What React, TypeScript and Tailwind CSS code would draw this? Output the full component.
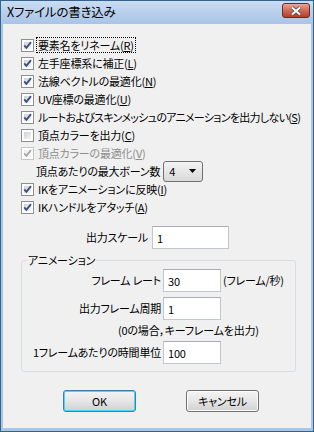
import { ReactNode } from 'react';

// Windows 7 風「Xファイルの書き込み」ダイアログ

const FONT = "font-['Noto_Sans_CJK_JP','Noto_Sans',sans-serif] [font-feature-settings:'palt']";

function CheckBox({ checked, disabled }: { checked: boolean; disabled?: boolean }) {
    return (
        <span
            className={`relative w-[13px] h-[13px] shrink-0 border bg-white p-[2px] flex ${disabled ? 'border-[#c5c5c5]' : 'border-[#8e8f8f]'}`}
        >
            <span
                className={`flex-1 bg-linear-to-br ${disabled ? 'from-[#eeeeee] to-[#fafafa]' : 'from-[#cfd3d8] to-[#f4f4f5]'}`}
            />
            {checked && (
                <svg className="absolute left-0 top-0" width="11" height="11" viewBox="0 0 11 11">
                    <path
                        d="M2.2 5.4 L4.4 7.8 L9 2.2"
                        fill="none"
                        stroke={disabled ? '#a8a8a8' : '#3a4f86'}
                        strokeWidth="1.9"
                    />
                </svg>
            )}
        </span>
    );
}

function Mn({ k }: { k: string }) {
    // ニーモニック (R) など
    return (
        <>
            (<span className="underline underline-offset-[1px]">{k}</span>)
        </>
    );
}

function CheckRow({
    label,
    k,
    checked,
    disabled,
    focus,
    tight,
}: {
    label: string;
    k: string;
    checked: boolean;
    disabled?: boolean;
    focus?: boolean;
    tight?: boolean;
}) {
    return (
        <div className="h-[18px] flex items-center gap-[2px]">
            <CheckBox checked={checked} disabled={disabled} />
            <span
                className={`whitespace-nowrap leading-[14px] px-[1px] border ${tight ? 'tracking-[-0.7px]' : ''} ${focus ? 'border-dotted border-black' : 'border-transparent'} ${disabled ? 'text-[#8d8d8d]' : 'text-black'}`}
            >
                {label}
                <Mn k={k} />
            </span>
        </div>
    );
}

function TextBox({ value, w }: { value: string; w: string }) {
    return (
        <input
            readOnly
            defaultValue={value}
            className={`${w} h-[23px] border border-[#c2c6cd] border-t-[#abadb3] bg-white px-[4px] text-[11px] text-black outline-none`}
        />
    );
}

function Button({ children, primary }: { children: ReactNode; primary?: boolean }) {
    return (
        <button
            className={`w-[73px] h-[22px] rounded-[3px] border text-[11px] text-black bg-linear-to-b from-[#f4f4f4] via-[#e6e6e6] to-[#d0d0d0] ${primary ? 'border-[#3c7fb1] shadow-[inset_0_0_0_1px_#48d7fb]' : 'border-[#707070] shadow-[inset_0_0_0_1px_#fcfcfc]'}`}
        >
            {children}
        </button>
    );
}

const options: { label: string; k: string; checked: boolean; disabled?: boolean; focus?: boolean; tight?: boolean }[] = [
    { label: '要素名をリネーム', k: 'R', checked: true, focus: true },
    { label: '左手座標系に補正', k: 'L', checked: true },
    { label: '法線ベクトルの最適化', k: 'N', checked: true },
    { label: 'UV座標の最適化', k: 'U', checked: true },
    { label: 'ルートおよびスキンメッシュのアニメーションを出力しない', k: 'S', checked: true, tight: true },
    { label: '頂点カラーを出力', k: 'C', checked: false },
    { label: '頂点カラーの最適化', k: 'V', checked: true, disabled: true },
];

export default function App() {
    return (
        <div className={`w-[314px] h-[432px] flex flex-col border border-[#35628f] bg-[#a9c5e8] text-[11px] tracking-[-0.2px] ${FONT}`}>
            {/* タイトルバー */}
            <div className="h-[23px] shrink-0 flex items-center justify-between pl-[6px] pr-[3px] bg-linear-to-b from-[#cadcf1] to-[#a8c4e7]">
                <span className="text-[12.5px] text-black leading-none">Xファイルの書き込み</span>
                <div className="w-[28px] h-[15px] mt-[-4px] rounded-[3px] border border-[#6a2a22] bg-linear-to-b from-[#e6a798] via-[#cf6a55] to-[#b93a26] flex items-center justify-center">
                    <svg width="12" height="10" viewBox="0 0 12 10">
                        <path d="M2 1.5 L10 8.5 M10 1.5 L2 8.5" stroke="#4a4a4a" strokeWidth="3.6" />
                        <path d="M2 1.5 L10 8.5 M10 1.5 L2 8.5" stroke="#ffffff" strokeWidth="2" />
                    </svg>
                </div>
            </div>

            {/* 本体 */}
            <div className="flex-1 mx-[2px] mb-[3px] bg-[#f0f0f0] flex flex-col">
                <div className="pt-[12px] pl-[18px] flex flex-col">
                    {options.map(o => (
                        <CheckRow key={o.k} {...o} />
                    ))}
                    <div className="h-[18px] flex items-center gap-[3px] pl-[15px]">
                        <span className="whitespace-nowrap text-black">頂点あたりの最大ボーン数</span>
                        <div className="w-[40px] h-[21px] rounded-[3px] border border-[#707070] bg-linear-to-b from-[#f3f3f3] to-[#d9d9d9] flex items-center justify-between pl-[5px] pr-[6px]">
                            <span className="text-black">4</span>
                            <svg width="7" height="4" viewBox="0 0 7 4">
                                <path d="M0 0 H7 L3.5 4 Z" fill="#000" />
                            </svg>
                        </div>
                    </div>
                    <CheckRow label="IKをアニメーションに反映" k="I" checked />
                    <CheckRow label="IKハンドルをアタッチ" k="A" checked />
                </div>

                {/* 出力スケール */}
                <div className="mt-[10px] flex items-center">
                    <span className="w-[145px] text-right text-black whitespace-nowrap">出力スケール</span>
                    <span className="w-[4px]" />
                    <TextBox value="1" w="w-[77px]" />
                </div>

                {/* アニメーション */}
                <fieldset className="mt-[4px] ml-[18px] mr-[15px] border border-[#d5dfe5] rounded-[3px] pb-[7px]">
                    <legend className="ml-[5px] px-[1px] text-black leading-[14px]">アニメーション</legend>
                    <div className="mt-[2px] flex items-center">
                        <span className="w-[139px] text-right whitespace-nowrap text-black">フレーム レート</span>
                        <span className="w-[2px]" />
                        <TextBox value="30" w="w-[58px]" />
                        <span className="ml-[2px] whitespace-nowrap text-black">(フレーム/秒)</span>
                    </div>
                    <div className="mt-[5px] flex items-center">
                        <span className="w-[139px] text-right whitespace-nowrap text-black">出力フレーム周期</span>
                        <span className="w-[2px]" />
                        <TextBox value="1" w="w-[58px]" />
                    </div>
                    <div className="mt-[2px] h-[17px] pl-[96px] flex items-center whitespace-nowrap text-black">
                        (0の場合，キーフレームを出力)
                    </div>
                    <div className="mt-[2px] flex items-center">
                        <span className="w-[139px] text-right whitespace-nowrap text-black">1フレームあたりの時間単位</span>
                        <span className="w-[2px]" />
                        <TextBox value="100" w="w-[58px]" />
                    </div>
                </fieldset>

                {/* ボタン */}
                <div className="mt-[18px] pl-[60px] flex gap-[50px]">
                    <Button primary>OK</Button>
                    <Button>キャンセル</Button>
                </div>
            </div>
        </div>
    );
}
